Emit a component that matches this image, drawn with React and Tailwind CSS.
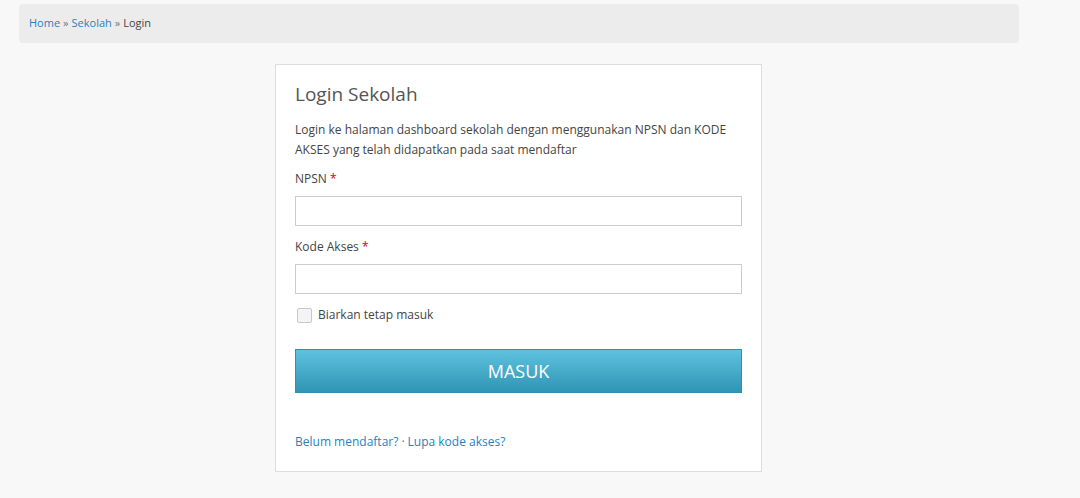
import React, { useState } from "react";

export default function App() {
  const [remember, setRemember] = useState(false);

  return (
    <div
      className="min-h-[498px] w-full bg-[#f8f8f8] pt-[4px] text-[#444]"
      style={{ fontFamily: '"Open Sans", "Noto Sans", sans-serif' }}
    >
      <div className="ml-[19px] w-[999px]">
        {/* breadcrumb */}
        <div className="flex h-[39px] w-[1000px] items-center rounded-[4px] bg-[#ececec] px-[10px] text-[11px] text-[#444]">
          <a href="#" className="text-[#2a7fbf]">Home</a>
          <span className="mx-[3px] text-[#777]">»</span>
          <a href="#" className="text-[#2a7fbf]">Sekolah</a>
          <span className="mx-[3px] text-[#777]">»</span>
          <span>Login</span>
        </div>

        {/* login card */}
        <div className="mx-auto mt-[21px] w-[487px] border border-[#dedede] bg-white px-[19px] pb-[19px] pt-[16px]">
          <h3 className="text-[19px] font-normal leading-[26px] text-[#555]">Login Sekolah</h3>
          <p className="mt-[13px] text-[12px] leading-[20px] text-[#444]">
            Login ke halaman dashboard sekolah dengan menggunakan NPSN dan KODE AKSES yang telah didapatkan pada saat mendaftar
          </p>

          <label className="mt-[9px] block text-[12px] leading-[20px]">
            NPSN <span className="text-[#d00]">*</span>
          </label>
          <input
            type="text"
            className="mt-[7px] block h-[30px] w-[447px] border border-[#ccc] bg-white px-2 text-[12px] outline-none"
          />

          <label className="mt-[11px] block text-[12px] leading-[20px]">
            Kode Akses <span className="text-[#d00]">*</span>
          </label>
          <input
            type="password"
            className="mt-[7px] block h-[30px] w-[447px] border border-[#ccc] bg-white px-2 text-[12px] outline-none"
          />

          <label className="mt-[11px] flex items-center text-[12px] leading-[20px]">
            <span
              onClick={() => setRemember(!remember)}
              className="ml-[2px] mr-[6px] flex h-[15px] w-[15px] items-center justify-center rounded-[2px] border border-[#c8c8c8] bg-[#f4f4f4] text-[10px]"
            >
              {remember ? "✓" : ""}
            </span>
            Biarkan tetap masuk
          </label>

          <button
            type="button"
            className="mt-[24px] block h-[44px] w-[447px] border border-[#2f8fb0] bg-gradient-to-b from-[#5ec3df] to-[#2e95b5] text-[18px] text-white"
          >
            MASUK
          </button>

          <div className="mt-[39px] text-[12px] leading-[20px] text-[#2a7fbf]">
            <a href="#">Belum mendaftar?</a>
            <span className="mx-[3px]">·</span>
            <a href="#">Lupa kode akses?</a>
          </div>
        </div>
      </div>
    </div>
  );
}
